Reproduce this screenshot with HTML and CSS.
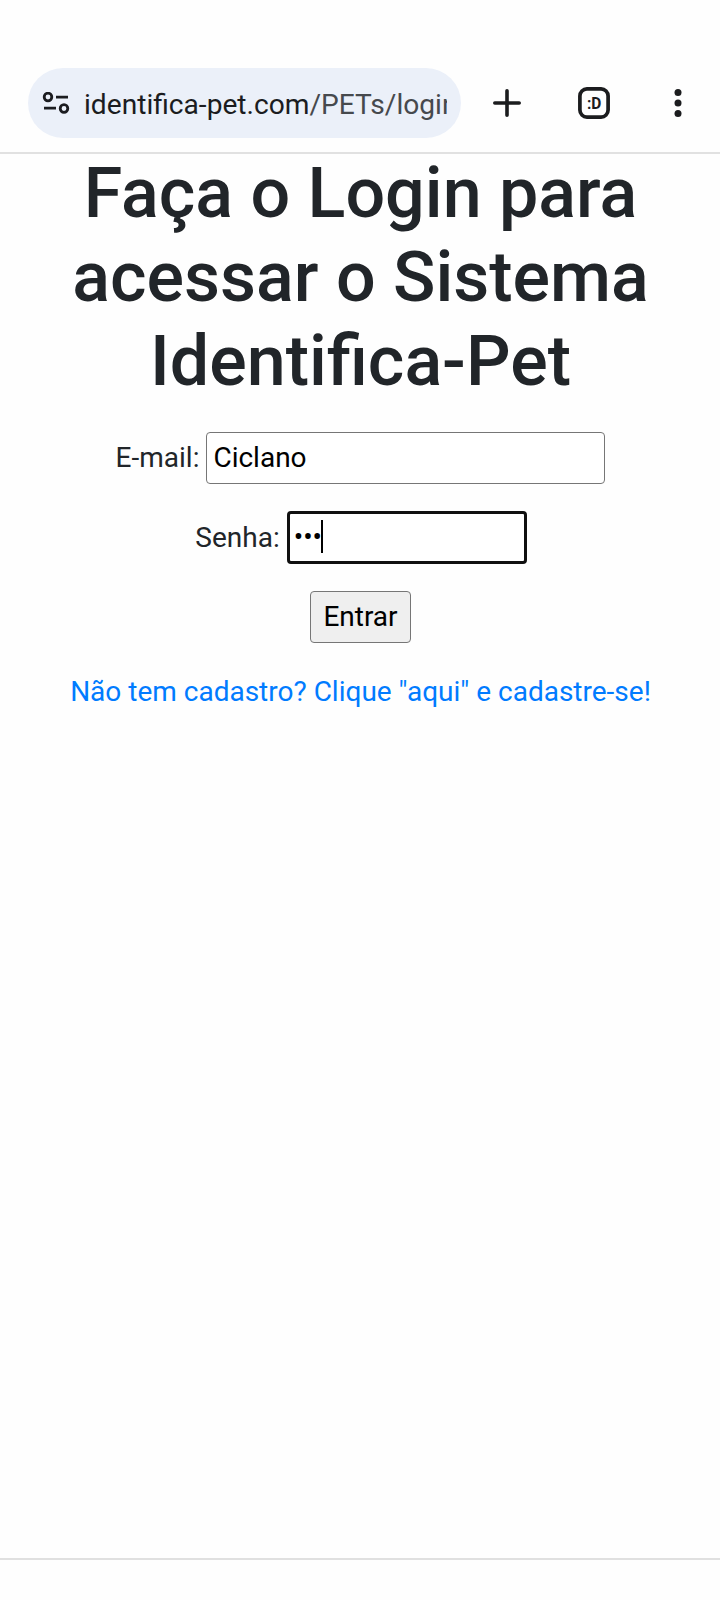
FILE: index.html
```
<!DOCTYPE html>
<html lang="pt-br">

<head>
  <meta charset="UTF-8">
  <meta name="viewport" content="width=device-width, initial-scale=1.0">
  <title>Identifica-Pet</title>
  <link rel="stylesheet" href="styles.css">
</head>

<body>
  <header class="browser-bar">
    <div class="address">
      <svg class="tune-icon" width="28" height="22" viewBox="0 0 28 22" fill="none" stroke="#1b1c20" stroke-width="2.8">
        <circle cx="6" cy="5" r="3.8"></circle>
        <path d="M14 5.2H26M2 16.2H14"></path>
        <circle cx="22" cy="16.5" r="3.8"></circle>
      </svg>
      <div class="url">identifica-pet.com<span class="path">/PETs/login</span></div>
    </div>
    <div class="actions">
      <svg width="28" height="28" viewBox="0 0 28 28" stroke="#1b1c1e" stroke-width="3.6" stroke-linecap="round">
        <path d="M14 1.8V26.2M1.8 14H26.2"></path>
      </svg>
      <svg class="tab-icon" width="32" height="32" viewBox="0 0 32 32">
        <rect x="1.9" y="1.9" width="28.2" height="28.2" rx="7" fill="none" stroke="#1b1c1e" stroke-width="3.7"></rect>
        <text class="tab-text" x="9" y="22" textLength="14.4" lengthAdjust="spacingAndGlyphs">:D</text>
      </svg>
      <svg width="8" height="28" viewBox="0 0 8 28" fill="#1b1c1e">
        <circle cx="4" cy="3.5" r="3.5"></circle>
        <circle cx="4" cy="14" r="3.5"></circle>
        <circle cx="4" cy="24.5" r="3.5"></circle>
      </svg>
    </div>
  </header>

  <main>
    <h1>Faça o Login para acessar o Sistema Identifica-Pet</h1>

    <form>
      <div class="field">
        <label for="email">E-mail:</label>
        <input type="text" id="email" value="Ciclano">
      </div>
      <div class="field senha">
        <label for="senha">Senha:</label>
        <div class="senha-box">
          <input type="password" id="senha" value="123">
          <span class="caret"></span>
        </div>
      </div>
      <button type="button">Entrar</button>
    </form>

    <a class="cadastro" href="#">Não tem cadastro? Clique "aqui" e cadastre-se!</a>
  </main>

  <footer></footer>
</body>

</html>
```

FILE: styles.css
```
* {
  box-sizing: border-box;
}

body {
  margin: 0;
  height: 1600px;
  display: flex;
  flex-direction: column;
  background-color: #fefefe;
  color: #212529;
  font-family: Roboto, sans-serif;
  font-size: 28px;
  line-height: 42px;
}

.browser-bar {
  height: 154px;
  padding: 68px 38px 0 28px;
  display: flex;
  align-items: flex-start;
  justify-content: space-between;
  border-bottom: 2px solid #e1e1e1;
}

.address {
  width: 433px;
  height: 70px;
  padding: 0 14px;
  display: flex;
  align-items: center;
  gap: 14px;
  border-radius: 35px;
  background-color: #ebf0f9;
}

.tune-icon {
  flex: none;
}

.url {
  flex: 1;
  padding-top: 3px;
  overflow: hidden;
  white-space: nowrap;
  font-size: 28.15px;
  color: #1b1c20;
}

.url .path {
  color: #46494d;
}

.actions {
  width: 189px;
  height: 70px;
  display: flex;
  align-items: center;
  justify-content: space-between;
}

.tab-icon {
  margin-right: 8px;
}

.tab-text {
  font-size: 17px;
  font-weight: bold;
  fill: #1b1c1e;
}

main {
  flex: 1;
  padding-left: 1px;
  display: flex;
  flex-direction: column;
  align-items: center;
  text-align: center;
}

h1 {
  width: 640px;
  margin: -3px 0 29px;
  font-size: 70px;
  font-weight: 500;
  line-height: 84px;
}

form {
  display: flex;
  flex-direction: column;
  align-items: center;
}

.field {
  margin-bottom: 27px;
  display: flex;
  align-items: center;
  gap: 7px;
}

.senha {
  padding-left: 1px;
}

input,
button {
  height: 52px;
  margin: 0;
  font-family: inherit;
  font-size: 28px;
  color: #000;
  border: 1px solid #767676;
  border-radius: 4px;
}

input {
  padding: 0 6px 2px;
  background-color: #fff;
  outline: none;
}

#email {
  width: 399px;
}

.senha-box {
  position: relative;
  display: flex;
}

#senha {
  width: 240px;
  height: 53px;
  padding: 0 4px 2px;
  border: 3px solid #101010;
}

.caret {
  position: absolute;
  left: 34px;
  top: 9px;
  width: 2px;
  height: 33px;
  background-color: #000;
}

button {
  width: 101px;
  padding: 0 0 2px;
  background-color: #efefef;
}

.cadastro {
  margin-top: 28px;
  color: #007bff;
  text-decoration: none;
}

footer {
  height: 42px;
  border-top: 2px solid #e0e0e0;
}
```
